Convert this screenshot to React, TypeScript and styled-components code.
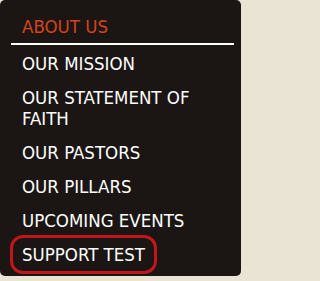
import React from "react";
import styled, { createGlobalStyle } from "styled-components";

const items = [
  { label: "OUR MISSION" },
  { label: "OUR STATEMENT OF FAITH" },
  { label: "OUR PASTORS" },
  { label: "OUR PILLARS" },
  { label: "UPCOMING EVENTS" },
  { label: "SUPPORT TEST", active: true },
];

const App = () => {
  return (
    <>
      <GlobalStyle />
      <Panel>
        <Heading>ABOUT US</Heading>
        <Menu>
          {items.map((item) => (
            <MenuItem key={item.label}>
              <MenuLink href="#" $active={item.active}>
                {item.label}
              </MenuLink>
            </MenuItem>
          ))}
        </Menu>
      </Panel>
    </>
  );
};

const GlobalStyle = createGlobalStyle`
  html, body {
    margin: 0;
    padding: 0;
    background: #eae4d5;
  }
`;

const Panel = styled.nav`
  box-sizing: border-box;
  width: 241px;
  height: 276px;
  padding: 16px 7px 0 11px;
  background: #1b1613;
  border-radius: 5px;
  font-family: "DejaVu Sans Condensed", "DejaVu Sans", sans-serif;
  font-stretch: condensed;
  font-size: 18.5px;
  line-height: 21px;
`;

const Heading = styled.h2`
  margin: 0;
  padding: 0 0 6px 11px;
  border-bottom: 2px solid #ffffff;
  color: #d4441c;
  font-size: inherit;
  font-weight: normal;
`;

const Menu = styled.ul`
  list-style: none;
  margin: 0;
  padding: 8px 8px 0 8px;
  display: flex;
  flex-direction: column;
  gap: 13px;
`;

const MenuItem = styled.li`
  margin: 0;
`;

const MenuLink = styled.a<{ $active?: boolean }>`
  display: inline-block;
  padding: 0 3px;
  color: #ffffff;
  text-decoration: none;
  border-radius: 4px;
  outline: ${(p) => (p.$active ? "3px solid #c3161c" : "none")};
  outline-offset: 6px;
`;

export default App;
